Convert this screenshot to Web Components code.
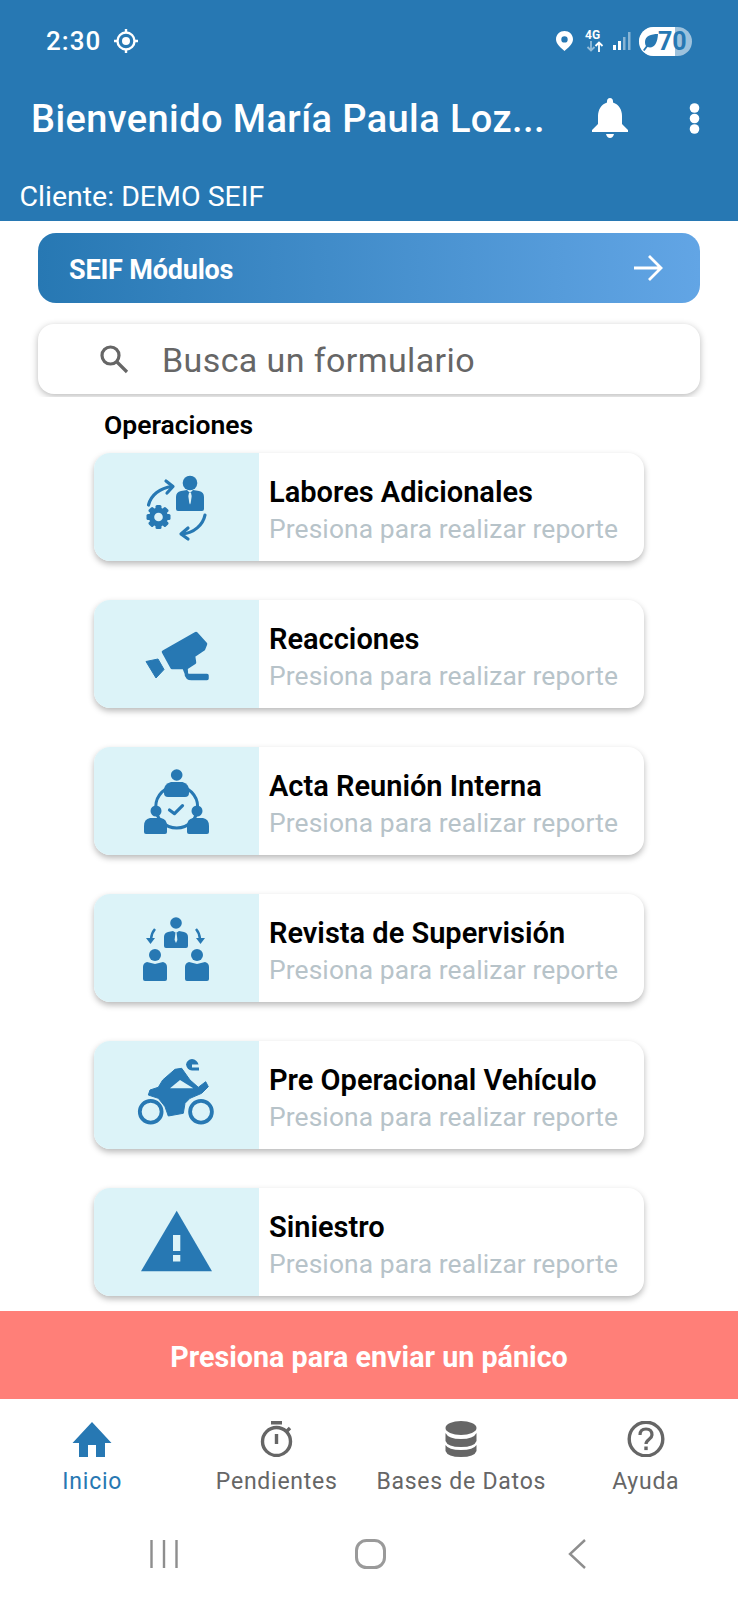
<!DOCTYPE html>
<html lang="es">
<head>
<meta charset="utf-8">
<title>SEIF</title>
<style>
  html, body { margin: 0; padding: 0; background: #fff; }
  body { font-family: Roboto, "Liberation Sans", sans-serif; width: 738px; height: 1600px; overflow: hidden; }
  app-shell { height: 1600px; }
</style>
</head>
<body>
<app-shell>
  <app-header title-text="Bienvenido María Paula Loz..." client="Cliente: DEMO SEIF"></app-header>
  <top-actions></top-actions>
  <form-list heading="Operaciones">
    <form-card name="Labores Adicionales">
      <svg slot="icon" width="165" height="108" viewBox="0 0 165 108">
        <circle cx="96" cy="30" r="7.300" fill="#2778b3"/>
        <path d="M82 44q0-5 5-6l6-1 3 3 3-3 6 1q5 1 5 6v12q0 2-2 2H84q-2 0-2-2z" fill="#2778b3"/>
        <path d="M95 40h2l.7 3-1 7-.7 1.500-.7-1.500-1-7z" fill="#dcf3f8"/>
        <g fill="#2778b3">
          <circle cx="64.500" cy="64" r="9.500"/>
          <rect x="61.500" y="52" width="6" height="24" rx="1.500"/>
          <rect x="61.500" y="52" width="6" height="24" rx="1.500" transform="rotate(45 64.500 64)"/>
          <rect x="61.500" y="52" width="6" height="24" rx="1.500" transform="rotate(90 64.500 64)"/>
          <rect x="61.500" y="52" width="6" height="24" rx="1.500" transform="rotate(135 64.500 64)"/>
        </g>
        <circle cx="64.500" cy="64" r="4.300" fill="#dcf3f8"/>
        <g fill="none" stroke="#2778b3" stroke-width="3.200" stroke-linecap="round" stroke-linejoin="round">
          <path d="M54.500 52C57 42 66 35 78 33.500"/>
          <path d="M72 28l7 5.500-6 6.500"/>
          <path d="M111 62C109 72 100 80 88 81"/>
          <path d="M94 75l-7 6 7 5"/>
        </g>
      </svg>
    </form-card>
    <form-card name="Reacciones">
      <svg slot="icon" width="165" height="108" viewBox="0 0 165 108" fill="#2778b3" stroke="#2778b3" stroke-width="3.500" stroke-linejoin="round">
        <path d="M69.500 52L102 33.500 111.500 44 109.500 49 99.500 55.700 100.500 62.500 92 68 92.500 75.500H113V78.500H97.500Q93 78.500 93 75L90 67.500 78 67.500z"/>
        <path d="M52 61.500l12-2.500 6 10.500-8 8.500z" stroke-width="1"/>
      </svg>
    </form-card>
    <form-card name="Acta Reunión Interna">
      <svg slot="icon" width="165" height="108" viewBox="0 0 165 108" fill="#2778b3">
        <circle cx="82.700" cy="60" r="21" fill="none" stroke="#2778b3" stroke-width="3"/>
        <circle cx="82.700" cy="28" r="5.800"/>
        <path d="M70 43q0-6 7-8h11.500q6.500 2 6.500 8v3q0 4-4 4H74q-4 0-4-4z"/>
        <circle cx="62" cy="64" r="5.500"/>
        <circle cx="103" cy="64" r="5.500"/>
        <path d="M50 79q0-7 6-8h11q6 1 6 8v6q0 2-2 2H52q-2 0-2-2z"/>
        <path d="M93 79q0-7 6-8h10q6 1 6 8v6q0 2-2 2H95q-2 0-2-2z"/>
        <path d="M75.500 63l5 3.700 8-8" fill="none" stroke="#2778b3" stroke-width="3.200" stroke-linecap="round" stroke-linejoin="round"/>
      </svg>
    </form-card>
    <form-card name="Revista de Supervisión">
      <svg slot="icon" width="165" height="108" viewBox="0 0 165 108" fill="#2778b3">
        <circle cx="82" cy="29" r="5.800"/>
        <path d="M70 43q0-4 4-5l5-1 3 2 3-2 5 1q4 1 4 5v9q0 2-2 2H72q-2 0-2-2z"/>
        <path d="M81.400 39h1.200l.8 7-1.400 3-1.400-3z" fill="#dcf3f8"/>
        <circle cx="61" cy="61" r="6"/>
        <circle cx="103" cy="61" r="6"/>
        <path d="M49 73q0-4 4-5l8 2 8-2q4 1 4 5v12q0 2-2 2H51q-2 0-2-2z"/>
        <path d="M91 73q0-4 4-5l8 2 8-2q4 1 4 5v12q0 2-2 2H93q-2 0-2-2z"/>
        <g fill="none" stroke="#2778b3" stroke-width="2.500">
          <path d="M61 35q-3.500 4-4 10"/>
          <path d="M102 35q3.500 4 4 10"/>
        </g>
        <path d="M52 44h9l-4.500 6z"/>
        <path d="M102 44h9l-4.500 6z"/>
      </svg>
    </form-card>
    <form-card name="Pre Operacional Vehículo">
      <svg slot="icon" width="165" height="108" viewBox="0 0 165 108" fill="#2778b3">
        <path d="M54.300 54L56 49 64.300 46.300 68.700 39 81 28.300 87.700 27.300 96 39 104.300 46.300 111.700 40.700 114.300 45.700 107.700 52.300 96 57.300 91 62.300 89.300 72.300 74.300 75 71 65.700 64.300 57.300z" stroke="#2778b3" stroke-width="1" stroke-linejoin="round"/>
        <path d="M76 47.300L86 39 99.300 47.300z" fill="#dcf3f8"/>
        <circle cx="56.700" cy="70.700" r="13.800" fill="#dcf3f8"/>
        <circle cx="107" cy="70.700" r="13.800" fill="#dcf3f8"/>
        <circle cx="56.700" cy="70.700" r="10.900" fill="none" stroke="#2778b3" stroke-width="3.800"/>
        <circle cx="107" cy="70.700" r="10.900" fill="none" stroke="#2778b3" stroke-width="3.800"/>
        <path d="M105 26.500h-7v-3h6.500q-1.500-5-6.500-5.500-5 .5-6 5.500 1 5.500 6 6h7z"/>
      </svg>
    </form-card>
    <form-card name="Siniestro">
      <svg slot="icon" width="165" height="108" viewBox="0 0 165 108" fill="#2778b3">
        <path d="M82.700 22.700L118 83.300H47z"/>
        <rect x="79" y="47" width="7.300" height="16" fill="#dcf3f8"/>
        <rect x="79" y="67" width="7.300" height="6.500" fill="#dcf3f8"/>
      </svg>
    </form-card>
  </form-list>
  <panic-button>Presiona para enviar un pánico</panic-button>
  <tab-bar></tab-bar>
  <system-nav></system-nav>
</app-shell>

<script>
class AppShell extends HTMLElement {
  constructor () {
    super()
    this.attachShadow({ mode: 'open' }).innerHTML = `
    <style>
      :host { display: flex; flex-direction: column; width: 738px; background: #fff; }
    </style>
    <slot></slot>
    `
  }
}

class AppHeader extends HTMLElement {
  constructor () {
    super()
    this.attachShadow({ mode: 'open' })
  }

  connectedCallback () {
    this.shadowRoot.innerHTML = `
    <style>
      :host { display: block; background: #2778b3; color: #fff; height: 221px; font-family: Roboto, sans-serif; }
      .status { display: flex; align-items: center; height: 82px; padding: 0 46px; }
      .time { font-size: 26px; font-weight: 500; letter-spacing: 1px; margin-right: 12px; }
      .right { margin-left: auto; display: flex; align-items: center; }
      .bar { display: flex; align-items: center; height: 72px; padding: 0 31px; }
      .title { font-size: 38px; font-weight: 500; white-space: nowrap; letter-spacing: .4px; position: relative; top: 1px; }
      .bell { margin-left: auto; margin-right: 61px; display: block; }
      .dots { display: block; margin-right: 7px; }
      .client { margin-top: 20px; padding-left: 19.500px; line-height: 46px; font-size: 28.500px; }
      .battery { position: relative; width: 53px; height: 29px; border-radius: 15px; background: rgba(255,255,255,.55); overflow: hidden; margin-left: 8px; }
      .battery .fill { position: absolute; left: 0; top: 0; bottom: 0; width: 36px; background: #fff; }
      .battery svg { position: absolute; left: 3px; top: 5px; }
      .battery span { position: absolute; left: 19px; top: 0; line-height: 29px; font-size: 25px; font-weight: 700; color: #2778b3; }
      .net { position: relative; width: 19px; height: 22px; margin: 0 9px 0 12px; }
      .net b { position: absolute; left: 0; top: -1px; font-size: 12px; line-height: 12px; font-weight: 700; }
      .net svg { position: absolute; left: 1px; top: 11px; }
    </style>
    <div class="status">
      <span class="time">2:30</span>
      <svg width="26" height="26" viewBox="0 0 26 26" fill="none" stroke="#fff">
        <circle cx="13" cy="13" r="8.500" stroke-width="2.400"/>
        <circle cx="13" cy="13" r="4" fill="#fff" stroke="none"/>
        <path d="M13 1v3M13 22v3M1 13h3M22 13h3" stroke-width="2.400"/>
      </svg>
      <div class="right">
        <svg width="17" height="20" viewBox="0 0 17 20"><path fill="#fff" fill-rule="evenodd" d="M8.500 0C13 0 17 3.500 17 8.300 17 13 12 17 8.500 20 5 17 0 13 0 8.300 0 3.500 4 0 8.500 0zm0 5.200a3.200 3.200 0 1 0 0 6.400 3.200 3.200 0 0 0 0-6.400z"/></svg>
        <div class="net"><b>4G</b>
          <svg width="18" height="11" viewBox="0 0 18 11" fill="none" stroke-width="1.800">
            <path d="M5 0v9M1.500 6L5 9.500 8.500 6" stroke="rgba(255,255,255,.5)"/>
            <path d="M13 11V2M9.500 5L13 1.500 16.500 5" stroke="#fff"/>
          </svg>
        </div>
        <svg width="18" height="18" viewBox="0 0 18 18">
          <rect x="0" y="13" width="3" height="5" fill="#fff"/>
          <rect x="5" y="9" width="3" height="9" fill="#fff"/>
          <rect x="10" y="5" width="2.500" height="13" fill="rgba(255,255,255,.45)"/>
          <rect x="15" y="0" width="2.500" height="18" fill="rgba(255,255,255,.45)"/>
        </svg>
        <div class="battery">
          <div class="fill"></div>
          <svg width="17" height="19" viewBox="0 0 17 19"><path fill="#2778b3" d="M16 2C9 2 3 4 3 10c0 2 .5 3 1 4l-3 4 1.500 1 3-4c6 2 10-3 10.500-13zM6 13q2-5 7-7-5 1-8 6z"/></svg>
          <span>70</span>
        </div>
      </div>
    </div>
    <div class="bar">
      <span class="title">${this.getAttribute('title-text')}</span>
      <svg class="bell" width="36" height="40" viewBox="0 0 36 40" fill="#fff">
        <path d="M18 0q3 0 3 3.500v1C27 6.500 30 12 30 18v8l6 6v2H0v-2l6-6v-8C6 12 9 6.500 15 4.500v-1Q15 0 18 0z"/>
        <path d="M14 36h8q-1 4-4 4t-4-4z"/>
      </svg>
      <svg class="dots" width="11" height="31" viewBox="0 0 11 31" fill="#fff">
        <circle cx="5.500" cy="5" r="4.800"/><circle cx="5.500" cy="15.500" r="4.800"/><circle cx="5.500" cy="26" r="4.800"/>
      </svg>
    </div>
    <div class="client">${this.getAttribute('client')}</div>
    `
  }
}

class TopActions extends HTMLElement {
  constructor () {
    super()
    this.attachShadow({ mode: 'open' }).innerHTML = `
    <style>
      :host { display: block; height: 176px; overflow: hidden; font-family: Roboto, sans-serif; }
      .wrap { display: flex; flex-direction: column; gap: 21px; padding: 12px 38px 0; }
      .modules {
        display: flex; align-items: center; justify-content: space-between; height: 70px;
        padding: 0 37px 0 31px; border-radius: 18px; color: #fff;
        background: linear-gradient(90deg, #2778b3, #62a5e5);
        font-size: 27px; font-weight: 700; letter-spacing: -.2px;
      }
      .modules span { padding-top: 3px; }
      .search {
        display: flex; align-items: center; height: 70px; border-radius: 16px; background: #fff;
        box-shadow: 0 2px 7px rgba(0,0,0,.28); color: #666; font-size: 34px; letter-spacing: .4px;
      }
      .search svg { margin: 0 33px 0 61px; }
      .search span { padding-top: 1px; }
    </style>
    <div class="wrap">
      <div class="modules">
        <span>SEIF Módulos</span>
        <svg width="30" height="26" viewBox="0 0 30 26" fill="none" stroke="#fff" stroke-width="2.800">
          <path d="M1 13h27M16 1l12 12-12 12"/>
        </svg>
      </div>
      <div class="search">
        <svg width="30" height="30" viewBox="0 0 30 30" fill="none" stroke="#666" stroke-width="3.200">
          <circle cx="11.500" cy="11.500" r="8.500"/><path d="M18 18l10 10"/>
        </svg>
        <span>Busca un formulario</span>
      </div>
    </div>
    `
  }
}

class FormList extends HTMLElement {
  constructor () {
    super()
    this.attachShadow({ mode: 'open' })
  }

  connectedCallback () {
    this.shadowRoot.innerHTML = `
    <style>
      :host { display: block; padding: 0 94px; font-family: Roboto, sans-serif; }
      h2 { margin: 0 0 0 10px; height: 56px; line-height: 56px; font-size: 26.500px; font-weight: 600; color: #000; }
      .cards { display: flex; flex-direction: column; gap: 39px; }
    </style>
    <h2>${this.getAttribute('heading')}</h2>
    <div class="cards"><slot></slot></div>
    `
  }
}

class FormCard extends HTMLElement {
  constructor () {
    super()
    this.attachShadow({ mode: 'open' })
  }

  connectedCallback () {
    this.shadowRoot.innerHTML = `
    <style>
      :host { display: flex; height: 108px; border-radius: 16px; background: #fff; overflow: hidden; box-shadow: 0 3px 6px rgba(0,0,0,.28); font-family: Roboto, sans-serif; }
      .icon { flex: 0 0 165px; background: #dcf3f8; display: flex; }
      .text { padding: 7px 0 0 10px; box-sizing: border-box; display: flex; flex-direction: column; justify-content: center; white-space: nowrap; }
      .name { font-size: 29px; line-height: 37px; font-weight: 600; color: #000; }
      .hint { font-size: 26.400px; line-height: 37px; color: #b7c3c9; letter-spacing: .1px; }
    </style>
    <div class="icon"><slot name="icon"></slot></div>
    <div class="text">
      <span class="name">${this.getAttribute('name')}</span>
      <span class="hint">Presiona para realizar reporte</span>
    </div>
    `
  }
}

class PanicButton extends HTMLElement {
  constructor () {
    super()
    this.attachShadow({ mode: 'open' }).innerHTML = `
    <style>
      :host { display: flex; align-items: center; justify-content: center; height: 85px; padding-top: 3px; margin-top: 15px; background: #ff7f78; color: #fff; font-family: Roboto, sans-serif; font-size: 28.700px; font-weight: 700; }
    </style>
    <slot></slot>
    `
  }
}

class TabBar extends HTMLElement {
  constructor () {
    super()
    this.attachShadow({ mode: 'open' }).innerHTML = `
    <style>
      :host { display: grid; grid-template-columns: repeat(4, 1fr); height: 111px; padding-top: 22px; box-sizing: border-box; font-family: Roboto, sans-serif; }
      .tab { display: flex; flex-direction: column; align-items: center; color: #666; font-size: 23px; letter-spacing: .75px; }
      .tab svg { display: block; height: 36px; }
      .tab span { margin-top: 11px; line-height: 28px; white-space: nowrap; }
      .tab.active { color: #2778b3; }
    </style>
    <div class="tab active">
      <svg width="40" height="36" viewBox="0 0 40 36" fill="#2778b3"><path d="M20 1l19.500 21H33v14H24V24h-8v12H7V22H.5z"/></svg>
      <span>Inicio</span>
    </div>
    <div class="tab">
      <svg width="36" height="36" viewBox="0 0 36 36" fill="none" stroke="#666" stroke-width="3.400">
        <rect x="12" y="0" width="11" height="3.500" fill="#666" stroke="none"/>
        <circle cx="17.500" cy="20.500" r="14"/>
        <path d="M17.500 13v10M28 10l3-3"/>
      </svg>
      <span>Pendientes</span>
    </div>
    <div class="tab">
      <svg width="32" height="36" viewBox="0 0 32 36" fill="#666">
        <ellipse cx="16" cy="7" rx="15.500" ry="7"/>
        <path d="M.5 12q3 6 15.500 6t15.500-6v8q-2 6-15.500 6T.5 20z"/>
        <path d="M.5 24q3 5 15.500 5t15.500-5v6q-2 6-15.500 6T.5 30z"/>
      </svg>
      <span>Bases de Datos</span>
    </div>
    <div class="tab">
      <svg width="40" height="36" viewBox="0 0 40 36" fill="none" stroke="#666" stroke-width="3.400">
        <circle cx="20" cy="18" r="16.800"/>
        <path d="M14 14q0-6 6-6t6 6c0 4-6 4.500-6 9" stroke-width="3.200"/>
        <rect x="18.300" y="25.500" width="3.400" height="3.600" fill="#666" stroke="none"/>
      </svg>
      <span>Ayuda</span>
    </div>
    `
  }
}

class SystemNav extends HTMLElement {
  constructor () {
    super()
    this.attachShadow({ mode: 'open' }).innerHTML = `
    <style>
      :host { display: grid; grid-template-columns: 150px 28px 177px 31px 182px 18px; height: 90px; padding-top: 29px; box-sizing: border-box; }
      svg { display: block; }
    </style>
    <span></span>
    <svg width="28" height="30" viewBox="0 0 28 30" stroke="#8e8e8e" stroke-width="2.400"><path d="M1.500 1v28M14 1v28M26.500 1v28"/></svg>
    <span></span>
    <svg width="31" height="30" viewBox="0 0 31 30" fill="none" stroke="#9a9a9a" stroke-width="3"><rect x="1.500" y="1.500" width="28" height="27" rx="10"/></svg>
    <span></span>
    <svg width="18" height="30" viewBox="0 0 18 30" fill="none" stroke="#8e8e8e" stroke-width="2.400"><path d="M17 1L2 15l15 14"/></svg>
    `
  }
}

customElements.define('app-shell', AppShell)
customElements.define('app-header', AppHeader)
customElements.define('top-actions', TopActions)
customElements.define('form-list', FormList)
customElements.define('form-card', FormCard)
customElements.define('panic-button', PanicButton)
customElements.define('tab-bar', TabBar)
customElements.define('system-nav', SystemNav)
</script>
</body>
</html>
